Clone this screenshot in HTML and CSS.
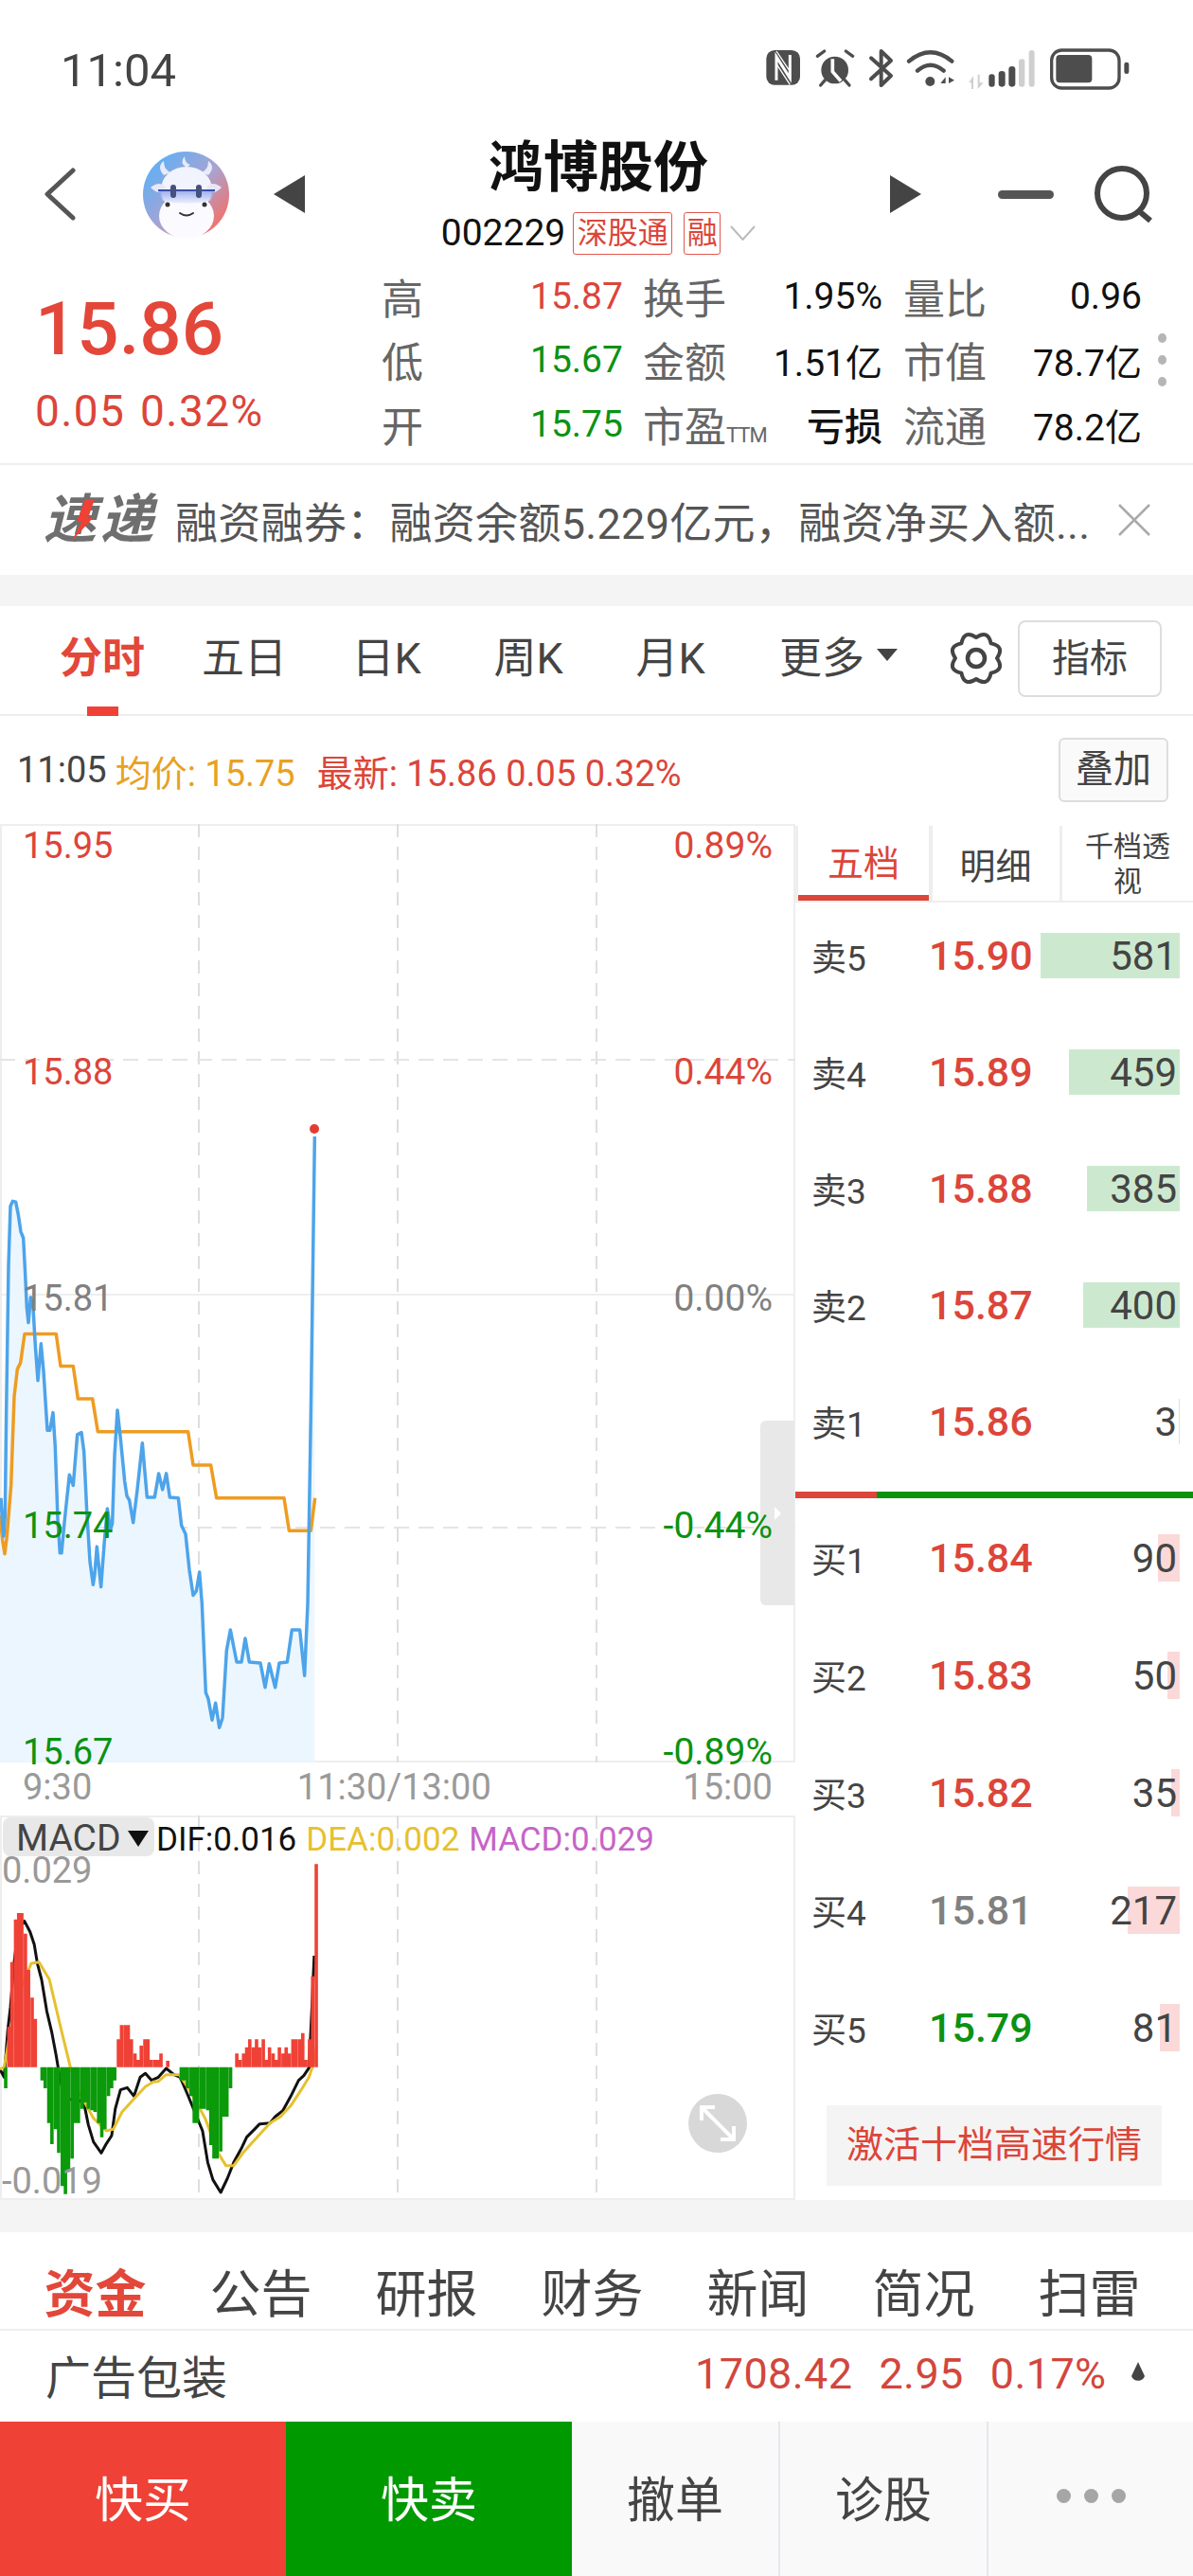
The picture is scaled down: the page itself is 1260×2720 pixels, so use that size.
FILE: index.html
```html
<!DOCTYPE html>
<html lang="zh-CN">
<head>
<meta charset="utf-8">
<title>鸿博股份</title>
<link rel="stylesheet" href="styles.css">
</head>
<body>
<div class="page">

  <div class="status">
    <span class="status-time">11:04</span>
    <svg class="status-icons" viewBox="0 0 1200 168">
      <rect x="28" y="27" width="107" height="110" rx="26" fill="#4d4d4d"/>
      <path d="M60 122V48L103 116V42" fill="none" stroke="#fff" stroke-width="9"/>
      <path d="M60 70L103 136M60 30L103 94" fill="none" stroke="#fff" stroke-width="4"/>
      <circle cx="245" cy="90" r="43" fill="#4d4d4d"/>
      <path d="M190 46L212 30M302 46L280 30M200 138L214 122M291 138L277 122" stroke="#4d4d4d" stroke-width="10" stroke-linecap="round"/>
      <path d="M238 55V95L264 125" fill="none" stroke="#fff" stroke-width="11"/>
      <path d="M360 52L423 108L392 138V30L423 60L360 118" fill="none" stroke="#4d4d4d" stroke-width="12" stroke-linejoin="round" stroke-linecap="round"/>
      <path d="M480 62Q548 6 616 62M507 92Q548 56 590 92" fill="none" stroke="#4d4d4d" stroke-width="13" stroke-linecap="round"/>
      <circle cx="547" cy="126" r="15" fill="#4d4d4d"/>
      <path d="M580 132L596 112V132ZM606 112L624 122L606 132Z" fill="#4d4d4d"/>
      <path d="M670 130L684 108V150H678V130ZM698 104H704V130L716 130L698 150Z" fill="#cfcfcf"/>
      <rect x="733" y="103" width="19" height="40" rx="9" fill="#4d4d4d"/>
      <rect x="764" y="93" width="21" height="50" rx="10" fill="#4d4d4d"/>
      <rect x="796" y="78" width="21" height="65" rx="10" fill="#4d4d4d"/>
      <rect x="828" y="55" width="19" height="88" rx="9" fill="#cfcfcf"/>
      <rect x="860" y="27" width="18" height="116" rx="9" fill="#cfcfcf"/>
      <rect x="932" y="27" width="214" height="120" rx="32" fill="none" stroke="#4d4d4d" stroke-width="10"/>
      <rect x="946" y="42" width="114" height="88" rx="12" fill="#4d4d4d"/>
      <rect x="1162" y="65" width="15" height="37" rx="7" fill="#4d4d4d"/>
    </svg>
  </div>

  <header class="header">
    <svg class="ic-back" viewBox="0 0 34 56"><path d="M31 3L4 28L31 53" fill="none" stroke="#555" stroke-width="5" stroke-linecap="round" stroke-linejoin="round"/></svg>
    <svg class="avatar" viewBox="0 0 91 91">
      <defs>
        <linearGradient id="av" x1="0.1" y1="0.1" x2="0.9" y2="0.85">
          <stop offset="0" stop-color="#5db0f7"/><stop offset="0.55" stop-color="#a9a3d0"/><stop offset="1" stop-color="#f2716a"/>
        </linearGradient>
        <linearGradient id="glass" x1="0" x2="0" y1="0" y2="1">
          <stop offset="0" stop-color="#7f96e6"/><stop offset="1" stop-color="#e8eeff"/>
        </linearGradient>
      </defs>
      <circle cx="45.500" cy="45.500" r="45.500" fill="url(#av)"/>
      <path d="M22 25Q14 16 22 10Q22 20 30 22ZM69 25Q77 16 69 10Q69 20 61 22ZM46 17Q38 12 44 5Q44 12 50 14Z" fill="#e8eaf8"/>
      <ellipse cx="46" cy="40" rx="27" ry="24" fill="#f1f3fd"/>
      <path d="M8 38Q18 30 24 38Q18 48 8 38ZM83 38Q73 30 67 38Q73 48 83 38Z" fill="#e6e8f8"/>
      <ellipse cx="46" cy="68" rx="29" ry="24" fill="#fbfbff"/>
      <path d="M16 41H76L71 52Q46 58 21 52Z" fill="url(#glass)" opacity=".75"/>
      <path d="M16 41H76" stroke="#3a4fa8" stroke-width="2"/>
      <rect x="29" y="35" width="6" height="14" rx="3" fill="#46507f"/>
      <rect x="56" y="35" width="6" height="14" rx="3" fill="#46507f"/>
      <circle cx="26" cy="56" r="2.500" fill="#333"/><circle cx="65" cy="56" r="2.500" fill="#333"/>
      <path d="M39 65Q46 70 53 65" fill="none" stroke="#333" stroke-width="2" stroke-linecap="round"/>
    </svg>
    <svg class="ic-tri-l" viewBox="0 0 33 40"><path d="M33 0V40L0 20Z" fill="#444"/></svg>
    <div class="title-block">
      <div class="title">鸿博股份</div>
      <div class="code-row">
        <span class="code">002229</span>
        <span class="badge">深股通</span>
        <span class="badge badge-rong">融</span>
        <svg class="ic-down" viewBox="0 0 27 16"><path d="M1 1L13.500 15L26 1" fill="none" stroke="#bbb" stroke-width="2"/></svg>
      </div>
    </div>
    <svg class="ic-tri-r" viewBox="0 0 33 40"><path d="M0 0V40L33 20Z" fill="#444"/></svg>
    <svg class="ic-minus" viewBox="0 0 59 9"><rect width="59" height="9" rx="4.500" fill="#555"/></svg>
    <svg class="ic-search" viewBox="0 0 62 60"><circle cx="30" cy="29" r="26" fill="none" stroke="#444" stroke-width="6"/><path d="M47 47L60 58" stroke="#444" stroke-width="6"/></svg>
  </header>

  <section class="quote">
    <div class="quote-main">
      <div class="quote-price">15.86</div>
      <div class="quote-change">0.05 0.32%</div>
    </div>
    <div class="quote-grid">
      <span class="q-label">高</span><span class="q-val up">15.87</span><span class="q-label q-ind">换手</span><span class="q-val">1.95%</span><span class="q-label q-ind">量比</span><span class="q-val">0.96</span>
      <span class="q-label">低</span><span class="q-val down">15.67</span><span class="q-label q-ind">金额</span><span class="q-val">1.51亿</span><span class="q-label q-ind">市值</span><span class="q-val">78.7亿</span>
      <span class="q-label">开</span><span class="q-val down">15.75</span><span class="q-label q-ind">市盈<small class="ttm">TTM</small></span><span class="q-val q-strong">亏损</span><span class="q-label q-ind">流通</span><span class="q-val">78.2亿</span>
    </div>
    <div class="kebab"><i></i><i></i><i></i></div>
  </section>

  <section class="news">
    <span class="news-logo">速递<svg class="news-bolt" viewBox="0 0 24 44"><path d="M14 0H24L17 20H22L0 44L10 24H5Z" fill="#ef4136"/></svg></span>
    <span class="news-text">融资融券：融资余额5.229亿元，融资净买入额...</span>
    <svg class="ic-close" viewBox="0 0 36 36"><path d="M2 2L34 34M34 2L2 34" stroke="#aaa" stroke-width="2.500"/></svg>
  </section>

  <div class="band"></div>

  <nav class="tabs">
    <span class="tab tab-active">分时</span>
    <span class="tab">五日</span>
    <span class="tab">日K</span>
    <span class="tab">周K</span>
    <span class="tab">月K</span>
    <span class="tab-more">更多<i class="caret"></i></span>
    <svg class="ic-gear" viewBox="0 0 60 60"><path d="M52 30Q60.500 42.600 45.600 45.600Q42.600 60.500 30 52Q17.400 60.500 14.400 45.600Q-.5 42.600 8 30Q-.5 17.400 14.400 14.400Q17.400 -.5 30 8Q42.600 -.5 45.600 14.400Q60.500 17.400 52 30Z" fill="none" stroke="#444" stroke-width="4" stroke-linejoin="round"/><circle cx="30" cy="30" r="9" fill="none" stroke="#444" stroke-width="4.500"/></svg>
    <span class="btn-indicator">指标</span>
  </nav>

  <div class="info">
    <span class="info-time">11:05</span>
    <span class="info-avg">均价: 15.75</span>
    <span class="info-last">最新: 15.86 0.05 0.32%</span>
    <span class="btn-overlay">叠加</span>
  </div>

  <main class="main">
    <div class="charts">
      <div class="price-chart">
        <svg class="chart-svg" width="840" height="991">
          <g class="grid-solid"><path d="M0 1H840M0 497H840M0 990H840M1 0V991M839 0V991"/></g>
          <g class="grid-dash"><path d="M210 0V991M420 0V991M630 0V991"/><path class="dash-h" d="M0 249H840M0 743H840"/></g>
          <g transform="translate(0,310) scale(.33333,.44643)">
            <path class="area" d="M0 900L3 900L8 960L12 990L16 940L20 700L27 350L33 210L40 198L50 200L58 230L66 270L74 285L80 370L85 450L90 485L97 425L105 450L112 540L120 622L130 535L138 600L150 740L158 740L168 698L175 780L183 950L190 1030L195 1030L205 950L220 845L232 870L245 750L258 745L266 790L275 930L285 1050L295 1105L300 1080L307 1015L313 1060L320 1110L330 1010L340 925L350 975L356 960L363 800L372 692L382 760L395 860L402 895L410 905L422 958L435 880L451 770L458 830L466 898L490 898L503 842L515 880L527 842L538 898L565 900L575 965L588 985L600 1070L612 1130L622 1120L632 1075L640 1150L652 1360L660 1375L672 1425L683 1385L695 1443L705 1420L718 1260L730 1212L740 1250L750 1288L765 1288L777 1232L790 1288L825 1290L840 1348L853 1292L872 1348L885 1290L910 1288L925 1212L950 1212L965 1320L975 1150L985 700L997 45V1525H0Z"/>
            <polyline class="line-avg" points="0,940 8,1000 15,1032 22,990 35,870 45,660 55,595 65,580 78,512 178,512 192,588 232,588 247,665 293,665 310,743 596,743 612,822 668,822 686,900 900,900 916,977 985,977 998,900"/>
            <polyline class="line-price" points="3,900 8,960 12,990 16,940 20,700 27,350 33,210 40,198 50,200 58,230 66,270 74,285 80,370 85,450 90,485 97,425 105,450 112,540 120,622 130,535 138,600 150,740 158,740 168,698 175,780 183,950 190,1030 195,1030 205,950 220,845 232,870 245,750 258,745 266,790 275,930 285,1050 295,1105 300,1080 307,1015 313,1060 320,1110 330,1010 340,925 350,975 356,960 363,800 372,692 382,760 395,860 402,895 410,905 422,958 435,880 451,770 458,830 466,898 490,898 503,842 515,880 527,842 538,898 565,900 575,965 588,985 600,1070 612,1130 622,1120 632,1075 640,1150 652,1360 660,1375 672,1425 683,1385 695,1443 705,1420 718,1260 730,1212 740,1250 750,1288 765,1288 777,1232 790,1288 825,1290 840,1348 853,1292 872,1348 885,1290 910,1288 925,1212 950,1212 965,1320 975,1150 985,700 997,45"/>
          </g>
          <circle cx="332" cy="322" r="5" fill="#e53b30"/>
        </svg>
        <div class="handle"><i></i></div>
        <span class="axis-l up row1">15.95</span><span class="axis-r up row1">0.89%</span>
        <span class="axis-l up row2">15.88</span><span class="axis-r up row2">0.44%</span>
        <span class="axis-l flat row3">15.81</span><span class="axis-r flat row3">0.00%</span>
        <span class="axis-l down row4">15.74</span><span class="axis-r down row4">-0.44%</span>
        <span class="axis-l down row5">15.67</span><span class="axis-r down row5">-0.89%</span>
      </div>

      <div class="time-axis"><span>9:30</span><span class="time-mid">11:30/13:00</span><span>15:00</span></div>

      <div class="macd-chart">
        <svg class="chart-svg" width="840" height="406">
          <g class="grid-solid"><path d="M0 1H840M0 405H840M1 0V406M839 0V406"/></g>
          <g class="grid-dash"><path d="M210 0V406M420 0V406M630 0V406"/></g>
          <g transform="translate(0,-57) scale(.54850,.33333)">
            <path class="line-dif" d="M0 975L8 1000L15 850L20 780L27 640L35 530L47 505L58 540L66 580L72 640L80 690L90 790L100 860L108 930L115 1000L125 1070L150 1070L162 1085L170 1150L180 1205L195 1240L205 1210L215 1185L222 1100L232 1040L245 1033L258 1060L270 1000L280 988L292 1010L305 1000L320 972L335 992L347 1000L360 1050L375 1110L390 1170L400 1270L410 1325L425 1365L438 1320L450 1270L465 1225L475 1190L490 1165L500 1148L520 1145L530 1125L545 1105L560 1060L575 1010L585 995L595 970L600 800L605 615"/>
            <path class="line-dea" d="M0 975L8 968L30 760L45 700L60 640L75 635L95 690L115 830L135 965L150 1040L180 1130L205 1170L218 1165L235 1110L260 1065L280 1030L295 1015L305 1013L320 992L345 992L365 1040L395 1130L420 1240L435 1280L450 1280L470 1235L495 1190L520 1145L540 1125L560 1090L580 1040L595 1000L605 950L610 900"/>
            <path class="bars-up" d="M17 968V840M23 968V635M30 968V500M36 968V480M42 968V480M49 968V545M55 968V660M62 968V748M68 968V815M228 968V880M234 968V835M241 968V835M247 968V835M253 968V880M260 968V925M266 968V945M272 968V900M279 968V880M285 968V880M291 968V945M298 968V945M304 968V945M310 968V925M323 968V948M456 968V925M462 968V945M469 968V925M475 968V905M481 968V880M488 968V905M494 968V880M500 968V905M507 968V880M513 968V945M519 968V905M526 968V925M532 968V945M538 968V905M545 968V925M551 968V905M557 968V925M564 968V880M570 968V880M577 968V880M583 968V860M589 968V945M596 968V880M602 968V680M609 968V325"/>
            <path class="bars-down" d="M11 968V1035M81 968V1010M87 968V1035M94 968V1145M100 968V1212M107 968V1165M113 968V1240M120 968V1345M126 968V1370M132 968V1300M139 968V1258M145 968V1145M151 968V1145M158 968V1100M164 968V1080M170 968V1100M177 968V1105M183 968V1110M190 968V1145M196 968V1190M202 968V1165M209 968V1060M215 968V1035M221 968V1010M349 968V1010M355 968V1010M361 968V1035M368 968V1060M374 968V1145M380 968V1145M387 968V1100M393 968V1100M400 968V1105M406 968V1215M412 968V1258M418 968V1258M425 968V1235M431 968V1125M437 968V1125M444 968V1035"/>
          </g>
        </svg>
        <div class="macd-head">
          <span class="macd-select">MACD<i class="caret caret-lg"></i></span>
          <span class="macd-dif">DIF:0.016</span>
          <span class="macd-dea">DEA:0.002</span>
          <span class="macd-val">MACD:0.029</span>
        </div>
        <span class="macd-max">0.029</span>
        <span class="macd-min">-0.019</span>
        <svg class="ic-expand" viewBox="0 0 62 62"><circle cx="31" cy="31" r="31" fill="#d8d8d8"/><path d="M14 28V14H28M14 14L48 48M48 34V48H34" fill="none" stroke="#fff" stroke-width="4"/></svg>
      </div>
    </div>

    <aside class="book">
      <div class="book-tabs">
        <span class="book-tab book-tab-active">五档</span>
        <span class="book-tab">明细</span>
        <span class="book-tab book-tab-small">千档透视</span>
      </div>
      <div class="rows rows-sell">
        <div class="row"><span class="r-label">卖5</span><span class="r-price up">15.90</span><span class="r-qty"><i class="bar bar-sell" style="width:147px"></i><b>581</b></span></div>
        <div class="row"><span class="r-label">卖4</span><span class="r-price up">15.89</span><span class="r-qty"><i class="bar bar-sell" style="width:117px"></i><b>459</b></span></div>
        <div class="row"><span class="r-label">卖3</span><span class="r-price up">15.88</span><span class="r-qty"><i class="bar bar-sell" style="width:98px"></i><b>385</b></span></div>
        <div class="row"><span class="r-label">卖2</span><span class="r-price up">15.87</span><span class="r-qty"><i class="bar bar-sell" style="width:102px"></i><b>400</b></span></div>
        <div class="row"><span class="r-label">卖1</span><span class="r-price up">15.86</span><span class="r-qty"><i class="bar bar-sell" style="width:1px"></i><b>3</b></span></div>
      </div>
      <div class="split"><i class="split-up"></i><i class="split-down"></i></div>
      <div class="rows rows-buy">
        <div class="row row-buy"><span class="r-label">买1</span><span class="r-price up">15.84</span><span class="r-qty"><i class="bar bar-buy" style="width:23px"></i><b>90</b></span></div>
        <div class="row row-buy"><span class="r-label">买2</span><span class="r-price up">15.83</span><span class="r-qty"><i class="bar bar-buy" style="width:13px"></i><b>50</b></span></div>
        <div class="row row-buy"><span class="r-label">买3</span><span class="r-price up">15.82</span><span class="r-qty"><i class="bar bar-buy" style="width:9px"></i><b>35</b></span></div>
        <div class="row row-buy"><span class="r-label">买4</span><span class="r-price flat">15.81</span><span class="r-qty"><i class="bar bar-buy" style="width:55px"></i><b>217</b></span></div>
        <div class="row row-buy"><span class="r-label">买5</span><span class="r-price down">15.79</span><span class="r-qty"><i class="bar bar-buy" style="width:21px"></i><b>81</b></span></div>
      </div>
      <div class="activate">激活十档高速行情</div>
    </aside>
  </main>

  <div class="band band-2"></div>

  <nav class="subtabs">
    <span class="subtab subtab-active">资金</span>
    <span class="subtab">公告</span>
    <span class="subtab">研报</span>
    <span class="subtab">财务</span>
    <span class="subtab">新闻</span>
    <span class="subtab">简况</span>
    <span class="subtab">扫雷</span>
  </nav>

  <div class="sector">
    <span class="sector-name">广告包装</span>
    <span class="sector-vals"><span>1708.42</span><span>2.95</span><span>0.17%</span></span>
    <svg class="ic-drop" viewBox="0 0 16 24"><path d="M8 0L15 15A7.500 7.500 0 0 1 1 15Z" fill="#444"/></svg>
  </div>

  <footer class="actions">
    <span class="act act-buy">快买</span>
    <span class="act act-sell">快卖</span>
    <span class="act act-plain">撤单</span>
    <span class="act act-plain">诊股</span>
    <span class="act act-more"><i></i><i></i><i></i></span>
  </footer>
</div>
</body>
</html>
```
FILE: styles.css
```css
* { box-sizing: border-box; }
html, body { margin: 0; padding: 0; background: #fff; }
body { font-family: Roboto, "Noto Sans CJK SC", sans-serif; color: #444; }
i { display: block; font-style: normal; }
.page { width: 1260px; height: 2720px; overflow: hidden; }
.up { color: #dc4539; }
.down { color: #0b9212; }
.flat { color: #808080; }

/* status bar */
.status { height: 130px; padding: 46px 60px 0 64px; display: flex; justify-content: space-between; align-items: flex-start; }
.status-time { font-size: 49px; line-height: 58px; color: #444; }
.status-icons { width: 400px; height: 56px; margin-top: -2px; }

/* header */
.header { height: 150px; display: flex; align-items: center; padding: 0 43px 0 46px; }
.ic-back { width: 34px; height: 56px; flex: none; }
.avatar { width: 91px; height: 91px; margin-left: 71px; flex: none; }
.ic-tri-l { width: 33px; height: 40px; margin-left: 47px; flex: none; }
.ic-tri-r { width: 33px; height: 40px; flex: none; margin-left: -2px; }
.title-block { flex: 1; align-self: flex-start; padding-top: 12px; text-align: center; }
.title { font-size: 58px; line-height: 70px; font-weight: 700; color: #111; }
.code-row { height: 68px; display: flex; align-items: center; justify-content: center; }
.code { font-size: 39px; color: #111; }
.badge { margin-left: 8px; width: 105px; height: 45px; border: 1px solid #e2574c; border-radius: 3px; color: #dc4539; font-size: 32px; line-height: 42px; text-align: center; white-space: nowrap; }
.badge-rong { margin-left: 12px; width: 39px; }
.ic-down { width: 27px; height: 16px; margin-left: 10px; }
.ic-minus { width: 59px; height: 9px; margin-left: 81px; flex: none; }
.ic-search { width: 62px; height: 60px; margin-left: 42px; flex: none; }

/* quote */
.quote { height: 211px; display: flex; border-bottom: 2px solid #eee; }
.quote-main { width: 403px; padding-left: 37px; }
.quote-price { font-size: 78px; line-height: 90px; margin-top: 23px; font-weight: 500; color: #e3473a; }
.quote-change { font-size: 46px; line-height: 56px; margin-top: 13px; color: #dc4539; letter-spacing: 1.4px; word-spacing: 3px; }
.quote-grid { display: grid; grid-template-columns: 157px 97px 152px 123px 110px 164px; grid-auto-rows: 67.5px; align-items: center; margin-top: -1px; height: 204px; }
.q-label { font-size: 44px; color: #666; white-space: nowrap; }
.q-ind { padding-left: 22px; }
.q-val { font-size: 39px; color: #111; text-align: right; white-space: nowrap; }
.q-val.up { color: #dc4539; }
.q-val.down { color: #0b9212; }
.q-strong { font-size: 40px; font-weight: 500; }
.ttm { font-size: 22px; letter-spacing: -1px; color: #666; }
.kebab { margin: 72px 0 0 17px; display: flex; flex-direction: column; gap: 13px; }
.kebab i { width: 9px; height: 10px; border-radius: 50%; background: #b5b5b5; }

/* news */
.news { height: 116px; display: flex; align-items: center; padding-left: 46px; white-space: nowrap; }
.news-logo { position: relative; width: 122px; font-size: 56px; line-height: 60px; font-weight: 700; font-style: italic; letter-spacing: 4px; color: #6f6f6f; }
.news-bolt { position: absolute; left: 30px; top: 8px; width: 24px; height: 44px; }
.news-text { margin-left: 17px; width: 995px; font-size: 45px; letter-spacing: .3px; color: #555; }
.ic-close { width: 36px; height: 36px; flex: none; }

.band { height: 33px; background: #f4f4f4; }
.band-2 { height: 34px; }

/* tabs */
.tabs { height: 116px; display: flex; align-items: center; padding: 0 0 12px 33px; border-bottom: 2px solid #eee; position: relative; font-size: 45px; color: #444; white-space: nowrap; }
.tab { width: 150px; text-align: center; }
.tab-active { color: #e3473a; font-weight: 700; position: relative; }
.tab-active::after { content: ""; position: absolute; left: 59px; bottom: -32px; width: 33px; height: 10px; background: #ef4136; }
.tab-more { margin-left: 40px; display: flex; align-items: center; gap: 13px; }
.caret { width: 0; height: 0; border-left: 11px solid transparent; border-right: 11px solid transparent; border-top: 13px solid #444; }
.ic-gear { width: 60px; height: 60px; margin: 8px 0 0 53px; }
.btn-indicator { margin: 9px 0 0 14px; width: 152px; height: 81px; border: 2px solid #ddd; border-radius: 8px; font-size: 40px; line-height: 77px; text-align: center; }

/* info */
.info { height: 114px; display: flex; align-items: center; padding-left: 18px; font-size: 38px; white-space: nowrap; position: relative; }
.info-time { color: #444; }
.info-avg { margin-left: 9px; color: #e8a11f; }
.info-last { margin-left: 23px; color: #dc4539; }
.btn-overlay { margin-left: auto; margin-right: 26px; width: 116px; height: 68px; border: 2px solid #ddd; border-radius: 6px; background: #fafafa; font-size: 40px; line-height: 64px; text-align: center; color: #444; }

/* charts */
.main { height: 1453px; display: flex; }
.charts { width: 840px; flex: none; }
.price-chart { position: relative; height: 991px; line-height: 28px; }
.chart-svg { position: absolute; left: 0; top: 0; display: block; }
.grid-solid path { fill: none; stroke: #eee; stroke-width: 2; }
.grid-dash path { fill: none; stroke: #dedede; stroke-width: 2; stroke-dasharray: 14 10; }
.grid-dash .dash-h { stroke: #e4e4e4; stroke-dasharray: 16 10; }
.area { fill: #ecf6fe; }
.line-price { fill: none; stroke: #4da4ea; stroke-width: 3.500; stroke-linejoin: round; vector-effect: non-scaling-stroke; }
.line-avg { fill: none; stroke: #ee9c22; stroke-width: 3.500; stroke-linejoin: round; vector-effect: non-scaling-stroke; }
.line-dif { fill: none; stroke: #111; stroke-width: 3; stroke-linejoin: round; vector-effect: non-scaling-stroke; }
.line-dea { fill: none; stroke: #e6c12e; stroke-width: 3; stroke-linejoin: round; vector-effect: non-scaling-stroke; }
.bars-up { fill: none; stroke: #ef4136; stroke-width: 3.600; vector-effect: non-scaling-stroke; }
.bars-down { fill: none; stroke: #0a9a0a; stroke-width: 3.600; vector-effect: non-scaling-stroke; }
.axis-l, .axis-r { position: absolute; }
.axis-l { left: 24px; font-size: 38px; }
.axis-r { right: 24px; font-size: 39px; }
.row1 { top: 9px; }
.row2 { top: 248px; }
.row3 { top: 487px; }
.row4 { top: 727px; }
.row5 { top: 966px; }
.handle { position: absolute; left: 803px; top: 630px; width: 36px; height: 195px; background: #e8e8e8; border-radius: 6px 0 0 6px; display: flex; align-items: center; justify-content: center; }
.handle i { width: 0; height: 0; border-top: 7px solid transparent; border-bottom: 7px solid transparent; border-left: 7px solid #fff; }
.time-axis { height: 56px; display: flex; justify-content: space-between; align-items: center; padding: 0 24px 5px; font-size: 38px; line-height: 30px; color: #9a9a9a; }
.time-mid { margin-left: 14px; }
.macd-chart { position: relative; height: 406px; }
.macd-head { position: absolute; left: 3px; top: 2px; height: 41px; display: flex; align-items: center; font-size: 35px; white-space: nowrap; }
.macd-select { width: 160px; height: 41px; background: #e8e8e8; border-radius: 8px; display: flex; align-items: center; justify-content: space-between; padding: 3px 6px 0 14px; font-size: 39px; line-height: 34px; color: #444; }
.caret-lg { border-left-width: 11px; border-right-width: 11px; border-top: 17px solid #111; }
.macd-dif { margin: 5px 0 0 2px; color: #111; }
.macd-dea { margin: 5px 0 0 10px; color: #e6c12e; }
.macd-val { margin: 5px 0 0 10px; color: #c664c8; }
.macd-max, .macd-min { position: absolute; left: 2px; font-size: 38px; line-height: 28px; color: #999; }
.macd-max { top: 44px; }
.macd-min { top: 372px; }
.ic-expand { position: absolute; left: 727px; top: 294px; width: 62px; height: 62px; }

/* order book */
.book { width: 420px; flex: none; }
.book-tabs { height: 81px; display: grid; grid-template-columns: 138px 134px 138px; margin-top: 2px; padding: 0 0 2px 3px; column-gap: 3.500px; background: #eee; }
.book-tab { background: #fff; font-size: 38px; display: flex; align-items: center; justify-content: center; text-align: center; }
.book-tab-active { color: #dc4539; border-bottom: 6px solid #dc4539; }
.book-tab-small { font-size: 30px; line-height: 37px; padding: 0 22px; }
.rows { display: flex; flex-direction: column; }
.rows-sell { padding-top: 32px; gap: 75px; }
.rows-buy { padding-top: 38px; gap: 74px; }
.row { height: 48px; display: flex; align-items: center; padding: 0 14px 0 17px; font-size: 42px; }
.row-buy { height: 50px; }
.r-label { width: 124px; font-size: 37px; color: #444; white-space: nowrap; }
.r-price { width: 112px; font-size: 43px; font-weight: 500; }
.r-qty { position: relative; flex: 1; align-self: stretch; display: flex; align-items: center; justify-content: flex-end; padding-right: 3px; }
.r-qty b { position: relative; font-weight: 400; color: #444; }
.bar { position: absolute; right: 0; top: 0; bottom: 0; }
.bar-sell { background: #cce9cf; }
.bar-buy { background: #fbd9d9; }
.split { display: flex; height: 7px; margin-top: 50px; }
.split-up { width: 86px; background: #dc4539; }
.split-down { flex: 1; background: #0a920f; }
.activate { margin: 57px 33px 0; height: 85px; background: #f4f4f4; color: #dc4539; font-size: 39px; line-height: 85px; text-align: center; white-space: nowrap; }

/* sub tabs */
.subtabs { height: 104px; display: flex; align-items: center; padding: 32px 0 0 13px; border-bottom: 2px solid #eee; font-size: 54px; color: #444; }
.subtab { width: 175px; text-align: center; line-height: 62px; }
.subtab-active { color: #e3473a; font-weight: 700; }

/* sector */
.sector { height: 96px; display: flex; align-items: center; padding: 0 0 5px 48px; }
.sector-name { font-size: 48px; color: #444; width: 686px; }
.sector-vals { display: flex; gap: 28px; font-size: 45px; letter-spacing: .4px; color: #d2463c; }
.ic-drop { width: 16px; height: 24px; margin-left: 26px; margin-top: -2px; }

/* actions */
.actions { height: 163px; display: flex; }
.act { display: flex; align-items: center; justify-content: center; font-size: 51px; padding-bottom: 6px; }
.act-buy { width: 302px; background: #ef4136; color: #fff; }
.act-sell { width: 302px; background: #009900; color: #fff; }
.act-plain { width: 220px; background: #f9f9f9; border-right: 2px solid #e6e6ee; color: #444; }
.act-more { flex: 1; background: #f9f9f9; gap: 14px; }
.act-more i { width: 15px; height: 15px; border-radius: 50%; background: #a6a6a6; }
```
